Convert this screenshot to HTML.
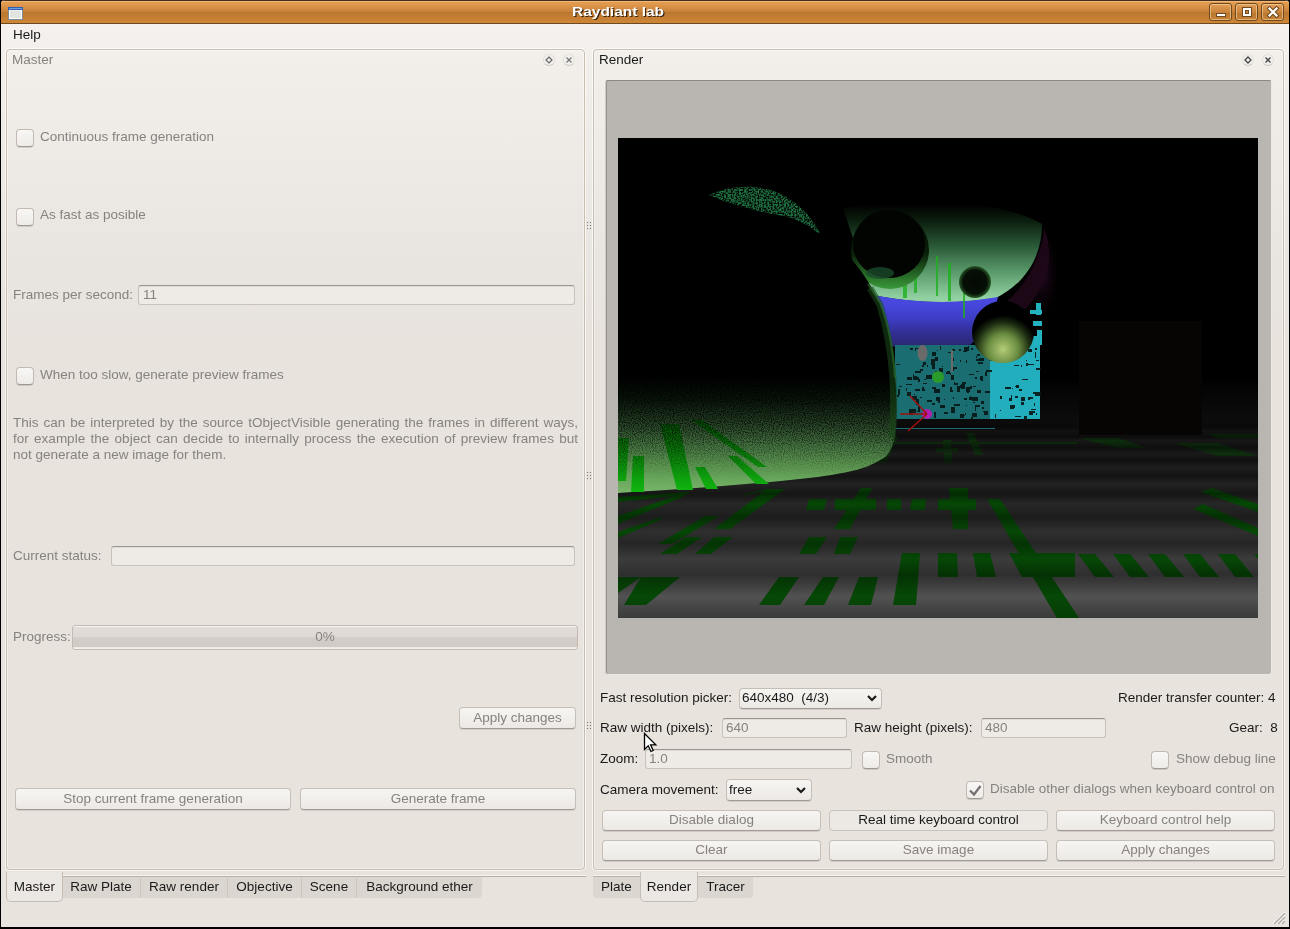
<!DOCTYPE html>
<html><head><meta charset="utf-8">
<style>
*{box-sizing:border-box;margin:0;padding:0}
html,body{width:1290px;height:929px;overflow:hidden;background:#000}
body{position:relative;font-family:"Liberation Sans",sans-serif;font-size:13.5px;color:#1a1a1a}
.a{position:absolute}
.t{position:absolute;white-space:pre;line-height:16px;margin-top:1px;will-change:transform}
.dis{color:#86827e}
#win{position:absolute;left:1px;top:0;width:1288px;height:927px;background:linear-gradient(#f4f1ee 24px,#f2efeb 60px,#efebe7 130px,#e9e5e1 250px,#e8e3dd 340px,#e8e3dd);border-radius:4px 4px 0 0}
#title{position:absolute;left:1px;top:0;width:1288px;height:24px;border-radius:4px 4px 0 0;
 background:linear-gradient(to bottom,#42301f 0px,#42301f 1px,#f0b67a 1px,#f0b67a 2px,#e39c4e 2px,#e09a4e 4px,#c88038 12px,#b8782f 12px,#bd7a31 14px,#cb8335 21px,#cd8535 23px,#6e4a22 23px,#6e4a22 24px)}
.tb{position:absolute;top:3px;width:23px;height:18px;border:1px solid #6e4a22;border-radius:3px;box-shadow:inset 0 0 0 1px rgba(255,220,170,.55);background:linear-gradient(#e3a058,#c88038 55%,#b8782f 56%,#c98236)}
.dk{position:absolute;width:12px;height:12px;border-radius:50%;border:1px solid #e2ddd8;border-bottom-color:#cfc9c3;background:#f3f1ee}
.frame{position:absolute;border:1px solid #c9bdb0;border-radius:4px;background:transparent;box-shadow:0 0 0 1px rgba(255,255,255,.7),inset 0 0 0 1px rgba(255,255,255,.45)}
.dot{position:absolute;width:1px;height:1px;background:#7d7a77;box-shadow:0 0 1px #a9a5a1}
.cb{position:absolute;width:18px;height:18px;border:1px solid #c2bab2;border-bottom-color:#9f9891;border-radius:4px;background:linear-gradient(#f8f7f5,#eeebe8);box-shadow:0 1px 0 rgba(0,0,0,.12)}
.inp{position:absolute;height:20px;border:1px solid #c9c2ba;border-top-color:#9d958d;border-radius:3px;background:#eeebe7;box-shadow:inset 0 1px 0 rgba(0,0,0,.06)}
.btn{will-change:transform;position:absolute;height:22px;border:1px solid #c6bfb7;border-bottom-color:#a39b93;border-radius:4px;background:linear-gradient(#f7f5f3,#ece9e5);text-align:center;line-height:20px;box-shadow:0 1px 0 rgba(0,0,0,.1)}
.tab{will-change:transform;position:absolute;height:22px;background:#dcd6d0;border-top:1px solid #b9b0a6;line-height:20px;text-align:center}
.tabsel{will-change:transform;position:absolute;background:#ebe7e2;border:1px solid #c6beb5;border-top:none;border-radius:0 0 5px 5px;text-align:center;line-height:30px}
</style></head><body>
<div id="win"></div>
<div id="title"></div>
<div class="t" style="left:572px;top:3px;color:#fff;font-weight:bold;font-size:13px;transform-origin:0 0;transform:scaleX(1.19);text-shadow:1px 1px 0 #3a2410">Raydiant lab</div>
<svg class="a" style="left:8px;top:7px" width="15" height="13"><rect x="0.5" y="0.5" width="14" height="12" fill="#fff" stroke="#7c8a98"/><rect x="0" y="0" width="15" height="3" fill="#2f5fb0"/><rect x="1" y="1" width="13" height="1" fill="#6f9fe0"/><rect x="2" y="3.5" width="11" height="7.5" fill="#e2e4e0"/></svg>
<div class="tb" style="left:1209px"></div><div class="tb" style="left:1235px"></div><div class="tb" style="left:1261px"></div>
<div class="a" style="left:1216px;top:13px;width:10px;height:4px;background:#fff;border:1px solid #6e4a22"></div>
<div class="a" style="left:1242px;top:7px;width:10px;height:10px;border:1px solid #6e4a22;box-shadow:inset 0 0 0 2px #fff,inset 0 0 0 3px #6e4a22"></div>
<svg class="a" style="left:1266px;top:6px" width="14" height="12"><path d="M3.5 2.5 L10.5 9.5 M10.5 2.5 L3.5 9.5" stroke="#6e4a22" stroke-width="4.2" stroke-linecap="square"/><path d="M3.5 2.5 L10.5 9.5 M10.5 2.5 L3.5 9.5" stroke="#fff" stroke-width="2.2" stroke-linecap="square"/></svg>

<div class="t" style="left:13px;top:26px">Help</div>

<!-- Master panel -->
<div class="frame" style="left:6px;top:49px;width:579px;height:821px"></div>
<div class="t dis" style="left:12px;top:51px">Master</div>

<div class="cb" style="left:16px;top:129px"></div>
<div class="t dis" style="left:40px;top:128px">Continuous frame generation</div>
<div class="cb" style="left:16px;top:208px"></div>
<div class="t dis" style="left:40px;top:206px">As fast as posible</div>

<div class="t dis" style="left:13px;top:286px">Frames per second:</div>
<div class="inp" style="left:138px;top:285px;width:437px"></div>
<div class="t dis" style="left:143px;top:286px">11</div>

<div class="cb" style="left:16px;top:367px"></div>
<div class="t dis" style="left:40px;top:366px">When too slow, generate preview frames</div>

<div class="t dis" style="left:13px;top:414px;width:565px;white-space:normal;text-align:justify;line-height:16px">This can be interpreted by the source tObjectVisible generating the frames in different ways, for example the object can decide to internally process the execution of preview frames but not generate a new image for them.</div>

<div class="t dis" style="left:13px;top:547px">Current status:</div>
<div class="inp" style="left:111px;top:546px;width:464px"></div>

<div class="t dis" style="left:13px;top:628px">Progress:</div>
<div class="a" style="left:72px;top:625px;width:506px;height:25px;border:1px solid #c3bab1;border-radius:3px;background:linear-gradient(#f7f5f3 0,#f7f5f3 1px,#e2ddd8 1px,#ddd8d3 11px,#d4cdc7 12px,#d2cbc5 21px,#ebe7e3 21px,#f5f3f0 23px)"></div>
<div class="t dis" style="left:72px;top:628px;width:506px;text-align:center">0%</div>

<div class="btn dis" style="left:459px;top:707px;width:117px">Apply changes</div>
<div class="btn dis" style="left:15px;top:788px;width:276px">Stop current frame generation</div>
<div class="btn dis" style="left:300px;top:788px;width:276px">Generate frame</div>

<div class="dot" style="left:587px;top:222px"></div><div class="dot" style="left:590px;top:222px"></div><div class="dot" style="left:587px;top:225px"></div><div class="dot" style="left:590px;top:225px"></div><div class="dot" style="left:587px;top:228px"></div><div class="dot" style="left:590px;top:228px"></div><div class="dot" style="left:587px;top:472px"></div><div class="dot" style="left:590px;top:472px"></div><div class="dot" style="left:587px;top:475px"></div><div class="dot" style="left:590px;top:475px"></div><div class="dot" style="left:587px;top:478px"></div><div class="dot" style="left:590px;top:478px"></div><div class="dot" style="left:587px;top:722px"></div><div class="dot" style="left:590px;top:722px"></div><div class="dot" style="left:587px;top:725px"></div><div class="dot" style="left:590px;top:725px"></div><div class="dot" style="left:587px;top:728px"></div><div class="dot" style="left:590px;top:728px"></div>
<!-- Render panel -->
<div class="frame" style="left:593px;top:49px;width:691px;height:821px"></div>
<div class="t" style="left:599px;top:51px">Render</div>
<div class="a" style="left:605px;top:80px;width:667px;height:595px;background:#b9b5b1;border:1px solid;border-color:#8c8882 #ebe7e3 #ebe7e3 #cfcac5;border-radius:3px;box-shadow:inset 1px 0 0 #97928d"></div>
<div class="a" id="img" style="left:618px;top:138px;width:640px;height:480px;background:#000;overflow:hidden"><!--IMG--><svg width="640" height="480" viewBox="0 0 640 480" style="display:block">
<defs>
<linearGradient id="floor" x1="0" y1="245" x2="0" y2="480" gradientUnits="userSpaceOnUse">
 <stop offset="0" stop-color="#030303"/>
 <stop offset="0.162" stop-color="#0c0c0c"/>
 <stop offset="0.234" stop-color="#161616"/>
 <stop offset="0.362" stop-color="#1e1e1e"/>
 <stop offset="0.489" stop-color="#252525"/>
 <stop offset="0.617" stop-color="#2e2e2e"/>
 <stop offset="0.774" stop-color="#3e3e3e"/>
 <stop offset="0.911" stop-color="#525252"/>
 <stop offset="1" stop-color="#444"/>
</linearGradient>
<linearGradient id="stripes" x1="0" y1="283" x2="0" y2="480" gradientUnits="userSpaceOnUse">
 <stop offset="0.00" stop-color="#000" stop-opacity="0"/>
 <stop offset="0.03" stop-color="#000" stop-opacity="0.45"/>
 <stop offset="0.05" stop-color="#000" stop-opacity="0"/>
 <stop offset="0.08" stop-color="#000" stop-opacity="0.45"/>
 <stop offset="0.10" stop-color="#000" stop-opacity="0"/>
 <stop offset="0.135" stop-color="#000" stop-opacity="0.45"/>
 <stop offset="0.165" stop-color="#000" stop-opacity="0"/>
 <stop offset="0.20" stop-color="#000" stop-opacity="0.45"/>
 <stop offset="0.235" stop-color="#000" stop-opacity="0"/>
 <stop offset="0.28" stop-color="#000" stop-opacity="0.4"/>
 <stop offset="0.32" stop-color="#000" stop-opacity="0"/>
 <stop offset="0.37" stop-color="#000" stop-opacity="0.4"/>
 <stop offset="0.42" stop-color="#000" stop-opacity="0"/>
 <stop offset="0.49" stop-color="#000" stop-opacity="0.35"/>
 <stop offset="0.56" stop-color="#000" stop-opacity="0"/>
 <stop offset="0.62" stop-color="#000" stop-opacity="0.3"/>
 <stop offset="0.70" stop-color="#000" stop-opacity="0"/>
 <stop offset="0.78" stop-color="#000" stop-opacity="0.32"/>
 <stop offset="0.89" stop-color="#000" stop-opacity="0"/>
 <stop offset="1.00" stop-color="#000" stop-opacity="0.15"/>
</linearGradient>
<linearGradient id="spgreen" x1="0" y1="232" x2="0" y2="355" gradientUnits="userSpaceOnUse">
 <stop offset="0" stop-color="#000"/>
 <stop offset="0.05" stop-color="#000"/>
 <stop offset="0.24" stop-color="#0a160a"/>
 <stop offset="0.43" stop-color="#264226"/>
 <stop offset="0.62" stop-color="#467642"/>
 <stop offset="0.76" stop-color="#5a9450"/>
 <stop offset="0.9" stop-color="#6aa85e"/>
 <stop offset="1" stop-color="#7ab66c"/>
</linearGradient>
<linearGradient id="fadeM" x1="0" y1="236" x2="0" y2="340" gradientUnits="userSpaceOnUse">
 <stop offset="0" stop-color="#fff"/>
 <stop offset="0.5" stop-color="#fff" stop-opacity="0.8"/>
 <stop offset="1" stop-color="#fff" stop-opacity="0"/>
</linearGradient>
<mask id="nmask" maskUnits="userSpaceOnUse" x="0" y="230" width="290" height="130"><rect x="0" y="230" width="290" height="130" fill="url(#fadeM)"/></mask>
<clipPath id="litclip"><path d="M0,232 L276,232 C279,260 279,285 276,302 C273,314 268,320 262,322 C250,330 235,334 200,339 C140,346 70,351 0,355 Z"/></clipPath>
<filter id="fblur" x="-0.1" y="-0.1" width="1.2" height="1.2"><feGaussianBlur stdDeviation="2.2 1.2"/></filter>
<filter id="speck2" x="0" y="0" width="1" height="1">
 <feTurbulence type="fractalNoise" baseFrequency="0.6" numOctaves="1" seed="7" result="n"/>
 <feColorMatrix in="n" type="matrix" values="0 0 0 0 0  0 0 0 0 0  0 0 0 0 0  0 0 0 -4 2.6" result="m"/>
 <feComposite in="SourceGraphic" in2="m" operator="in"/>
</filter>
<filter id="speck" x="0" y="0" width="1" height="1">
 <feTurbulence type="fractalNoise" baseFrequency="0.9" numOctaves="1" seed="4" result="n"/>
 <feColorMatrix in="n" type="matrix" values="0 0 0 0 0  0 0 0 0 0  0 0 0 0 0  0 0 0 -3 1.8" result="m"/>
 <feComposite in="SourceGraphic" in2="m" operator="in"/>
</filter>
<linearGradient id="dome" x1="0" y1="66" x2="0" y2="160" gradientUnits="userSpaceOnUse">
 <stop offset="0" stop-color="#000"/>
 <stop offset="0.18" stop-color="#0c1e0e"/>
 <stop offset="0.45" stop-color="#2a5a38"/>
 <stop offset="0.72" stop-color="#5a9a6a"/>
 <stop offset="1" stop-color="#92d2a2"/>
</linearGradient>
<linearGradient id="blue" x1="0" y1="157" x2="0" y2="208" gradientUnits="userSpaceOnUse">
 <stop offset="0" stop-color="#4c4ce8"/>
 <stop offset="0.45" stop-color="#3e3ec8"/>
 <stop offset="0.7" stop-color="#33309a"/>
 <stop offset="1" stop-color="#2a2870"/>
</linearGradient>
<radialGradient id="sph3" cx="0.5" cy="0.78" r="0.55">
 <stop offset="0" stop-color="#b4cc78"/>
 <stop offset="0.45" stop-color="#6a8c40"/>
 <stop offset="0.8" stop-color="#1a2a10"/>
 <stop offset="1" stop-color="#000"/>
</radialGradient>
<radialGradient id="sph1" cx="0.5" cy="0.62" r="0.5" fx="0.5" fy="0.75">
 <stop offset="0" stop-color="#0a1a0a"/>
 <stop offset="0.6" stop-color="#040a04"/>
 <stop offset="0.85" stop-color="#1a4a1a"/>
 <stop offset="1" stop-color="#3a8a3a"/>
</radialGradient>
<linearGradient id="sph1l" x1="0" y1="0" x2="0" y2="1">
 <stop offset="0" stop-color="#000"/>
 <stop offset="0.55" stop-color="#0a200a"/>
 <stop offset="1" stop-color="#3a9a3a"/>
</linearGradient>
<radialGradient id="sph2" cx="0.5" cy="0.5" r="0.5">
 <stop offset="0" stop-color="#040804"/>
 <stop offset="0.75" stop-color="#061006"/>
 <stop offset="1" stop-color="#2a5a2a"/>
</radialGradient>
<radialGradient id="glow" cx="0.5" cy="0.5" r="0.5">
 <stop offset="0" stop-color="#4a1040" stop-opacity="0.9"/>
 <stop offset="1" stop-color="#000" stop-opacity="0"/>
</radialGradient>
<linearGradient id="stripeg" x1="0" y1="280" x2="0" y2="355" gradientUnits="userSpaceOnUse">
 <stop offset="0" stop-color="#064406"/>
 <stop offset="1" stop-color="#10b810"/>
</linearGradient>
</defs>
<rect width="640" height="480" fill="#000"/>
<!-- floor -->
<rect x="0" y="245" width="640" height="235" fill="url(#floor)"/>
<!-- floor green bars -->
<g fill="#064806">
 <polygon points="23,439 62,439 28,467 6,467"/>
 <polygon points="0,439 23,439 0,455"/>
 <polygon points="161,439 181,439 162,467 141,467"/>
 <polygon points="205,439 221,439 206,467 186,467"/>
 <polygon points="241,439 260,439 253,467 230,467"/>
 <polygon points="284,415 302,415 298,467 275,467"/>
  <polygon points="191,399 209,399 198,416 181,416"/>
 <polygon points="222,399 240,399 232,416 216,416"/>
 <polygon points="243,350 254,350 232,391 216,391"/>
 <polygon points="217,361 258,361 258,372 217,372"/>
 <polygon points="191,361 209,361 206,372 188,372"/>
 <polygon points="269,361 283,361 283,372 269,372"/>
 <polygon points="294,361 308,361 307,372 292,372"/>
 <polygon points="0,359 70,354 65,357 0,364"/>
 <polygon points="0,378 68,354 72,354 62,360 0,386"/>
 <polygon points="0,394 46,378 40,383 0,400"/>
 <polygon points="87,378 101,378 54,406 40,406"/>
 <polygon points="68,399 84,399 59,416 42,416"/>
 <polygon points="96,399 115,399 93,416 77,416"/>
 <polygon points="149,351 167,351 112,391 96,391"/>
 <polygon points="122,357 149,351 155,351 128,357"/>
 <polygon points="320,415 339,415 340,439 320,439"/>
 <polygon points="355,415 372,415 378,439 359,439"/>
 <polygon points="391,415 457,415 457,439 404,439"/>
 <polygon points="460,416 477,416 496,439 477,439"/>
 <polygon points="495,416 512,416 531,439 512,439"/>
 <polygon points="530,416 547,416 566,439 547,439"/>
 <polygon points="565,416 582,416 601,439 582,439"/>
 <polygon points="600,416 617,416 636,439 617,439"/>
 <polygon points="636,416 640,416 640,421"/>
 <polygon points="369,361 382,361 461,480 439,480"/>
 <polygon points="331,350 350,350 350,391 335,391"/>
 <polygon points="320,361 358,361 358,372 320,372"/>
 <polygon points="594,350 640,366 640,374 583,354"/>
 <polygon points="585,366 640,390 640,398 575,371"/>
</g>
<g fill="#074007" opacity="0.55">
 <polygon points="270,299 280,299 268,325 258,325"/>
 <polygon points="325,302 333,302 334,325 326,325"/>
 <polygon points="318,310 340,310 340,314 318,314"/>
 <polygon points="348,295 356,295 365,317 357,317"/>
 <polygon points="240,304 460,304 460,306 240,306"/>
 <polygon points="460,300 500,300 530,310 500,310"/>
 <polygon points="555,305 600,305 640,318 600,318"/>
 <polygon points="590,296 640,296 640,300 600,300"/>
</g>
<rect x="0" y="245" width="640" height="235" fill="url(#stripes)"/>
<!-- dark box -->
<rect x="461" y="183" width="123" height="114" fill="#070503"/>
<!-- magenta glow -->
<ellipse cx="425" cy="135" rx="18" ry="50" fill="url(#glow)" opacity="0.6"/>
<!-- dome -->
<path d="M225,70 C280,58 380,60 424,86 C424,118 408,145 378,160 C340,166 300,166 255,157 C245,130 235,100 225,70 Z" fill="url(#dome)"/>
<path d="M426,90 C440,125 425,160 395,182 L386,166 C410,145 424,118 426,90 Z" fill="#1e0818" opacity="0.9"/>
<!-- blue band -->
<path d="M250,156 C300,166 340,166 380,159 C376,178 366,196 352,207 C320,211 300,211 270,208 C262,190 256,172 250,156 Z" fill="url(#blue)"/>
<!-- green drips on dome -->
<g fill="#20b020" opacity="0.8">
 <rect x="296" y="130" width="3" height="25"/><rect x="318" y="118" width="2" height="40"/><rect x="330" y="125" width="3" height="38"/>
 <rect x="285" y="140" width="4" height="20"/><rect x="345" y="150" width="2" height="30"/>
</g>
<!-- teal structure -->
<rect x="277" y="207" width="95" height="74" fill="#1a6e72"/>
<rect x="372" y="207" width="50" height="74" fill="#22aebc"/>
<g fill="#22b2c0"><rect x="418" y="165" width="5" height="12"/><rect x="412" y="172" width="12" height="4"/><rect x="415" y="183" width="9" height="5"/><rect x="419" y="192" width="5" height="8"/><rect x="410" y="198" width="14" height="9"/></g>
<g fill="#061818" opacity="0.92"><rect x="342" y="247" width="4" height="3"/><rect x="361" y="220" width="5" height="3"/><rect x="390" y="214" width="2" height="3"/><rect x="393" y="257" width="1" height="4"/><rect x="415" y="254" width="5" height="2"/><rect x="396" y="212" width="1" height="2"/><rect x="363" y="263" width="3" height="3"/><rect x="305" y="224" width="3" height="3"/><rect x="289" y="254" width="4" height="4"/><rect x="397" y="258" width="3" height="2"/><rect x="281" y="248" width="3" height="1"/><rect x="319" y="212" width="1" height="1"/><rect x="410" y="211" width="4" height="3"/><rect x="358" y="221" width="6" height="2"/><rect x="322" y="208" width="1" height="4"/><rect x="378" y="208" width="3" height="4"/><rect x="357" y="239" width="2" height="2"/><rect x="332" y="235" width="1" height="2"/><rect x="416" y="265" width="1" height="3"/><rect x="333" y="269" width="4" height="6"/><rect x="418" y="222" width="3" height="1"/><rect x="324" y="228" width="1" height="1"/><rect x="360" y="224" width="5" height="2"/><rect x="342" y="276" width="4" height="4"/><rect x="332" y="252" width="3" height="2"/><rect x="313" y="221" width="4" height="6"/><rect x="413" y="271" width="5" height="1"/><rect x="292" y="210" width="3" height="2"/><rect x="333" y="237" width="3" height="5"/><rect x="302" y="259" width="2" height="1"/><rect x="357" y="268" width="1" height="5"/><rect x="408" y="222" width="1" height="1"/><rect x="341" y="211" width="2" height="2"/><rect x="359" y="216" width="3" height="2"/><rect x="417" y="254" width="6" height="4"/><rect x="297" y="210" width="1" height="3"/><rect x="377" y="276" width="1" height="4"/><rect x="346" y="260" width="3" height="2"/><rect x="288" y="246" width="6" height="1"/><rect x="382" y="258" width="2" height="3"/><rect x="345" y="213" width="4" height="1"/><rect x="359" y="252" width="4" height="3"/><rect x="364" y="213" width="6" height="1"/><rect x="403" y="259" width="4" height="4"/><rect x="343" y="246" width="4" height="5"/><rect x="363" y="242" width="2" height="1"/><rect x="365" y="273" width="3" height="1"/><rect x="297" y="251" width="5" height="2"/><rect x="326" y="274" width="4" height="2"/><rect x="372" y="221" width="4" height="2"/><rect x="332" y="249" width="2" height="3"/><rect x="348" y="267" width="1" height="1"/><rect x="317" y="219" width="3" height="4"/><rect x="308" y="237" width="6" height="4"/><rect x="322" y="267" width="5" height="3"/><rect x="396" y="227" width="5" height="1"/><rect x="317" y="233" width="4" height="6"/><rect x="296" y="240" width="2" height="1"/><rect x="297" y="210" width="6" height="1"/><rect x="367" y="254" width="3" height="1"/><rect x="306" y="241" width="2" height="1"/><rect x="353" y="210" width="2" height="2"/><rect x="354" y="275" width="5" height="4"/><rect x="300" y="268" width="2" height="6"/><rect x="410" y="259" width="2" height="3"/><rect x="366" y="273" width="4" height="4"/><rect x="403" y="264" width="3" height="3"/><rect x="417" y="214" width="1" height="6"/><rect x="406" y="278" width="3" height="4"/><rect x="410" y="226" width="6" height="1"/><rect x="289" y="239" width="5" height="3"/><rect x="347" y="209" width="1" height="3"/><rect x="302" y="231" width="3" height="2"/><rect x="351" y="259" width="6" height="3"/><rect x="347" y="275" width="1" height="2"/><rect x="357" y="267" width="5" height="2"/><rect x="398" y="247" width="3" height="3"/><rect x="401" y="251" width="3" height="2"/><rect x="352" y="248" width="2" height="3"/><rect x="349" y="251" width="1" height="4"/><rect x="351" y="236" width="5" height="1"/><rect x="376" y="212" width="5" height="3"/><rect x="414" y="273" width="3" height="2"/><rect x="295" y="238" width="4" height="4"/><rect x="304" y="251" width="3" height="2"/><rect x="417" y="210" width="2" height="2"/><rect x="318" y="259" width="2" height="4"/><rect x="348" y="249" width="4" height="5"/><rect x="305" y="245" width="4" height="1"/><rect x="336" y="245" width="4" height="2"/><rect x="367" y="253" width="5" height="2"/><rect x="364" y="269" width="2" height="2"/><rect x="322" y="230" width="2" height="2"/><rect x="305" y="214" width="2" height="2"/><rect x="314" y="214" width="4" height="4"/><rect x="295" y="236" width="1" height="6"/><rect x="358" y="233" width="3" height="1"/><rect x="368" y="232" width="6" height="2"/><rect x="346" y="209" width="5" height="4"/><rect x="358" y="218" width="1" height="2"/><rect x="397" y="278" width="6" height="1"/><rect x="296" y="256" width="1" height="1"/><rect x="344" y="244" width="4" height="2"/><rect x="279" y="257" width="2" height="2"/><rect x="328" y="234" width="4" height="2"/><rect x="350" y="208" width="1" height="3"/><rect x="304" y="249" width="2" height="3"/><rect x="294" y="260" width="3" height="2"/><rect x="324" y="246" width="3" height="3"/><rect x="335" y="259" width="1" height="2"/><rect x="291" y="271" width="4" height="6"/><rect x="316" y="276" width="2" height="3"/><rect x="335" y="220" width="1" height="3"/><rect x="348" y="222" width="1" height="3"/><rect x="280" y="251" width="2" height="6"/><rect x="334" y="211" width="3" height="2"/><rect x="314" y="227" width="3" height="4"/><rect x="336" y="244" width="1" height="3"/><rect x="288" y="250" width="1" height="3"/><rect x="300" y="241" width="2" height="3"/><rect x="362" y="238" width="3" height="4"/><rect x="334" y="229" width="5" height="2"/><rect x="316" y="274" width="2" height="6"/><rect x="387" y="249" width="6" height="2"/><rect x="375" y="211" width="3" height="3"/><rect x="418" y="275" width="1" height="2"/><rect x="345" y="277" width="2" height="1"/><rect x="411" y="259" width="4" height="2"/><rect x="394" y="250" width="1" height="1"/><rect x="342" y="222" width="1" height="2"/><rect x="295" y="239" width="6" height="3"/><rect x="314" y="249" width="4" height="2"/><rect x="353" y="279" width="2" height="3"/><rect x="293" y="271" width="5" height="4"/><rect x="316" y="251" width="6" height="4"/><rect x="304" y="227" width="2" height="2"/><rect x="349" y="254" width="2" height="1"/><rect x="278" y="226" width="4" height="1"/><rect x="309" y="227" width="1" height="2"/><rect x="367" y="234" width="2" height="4"/><rect x="326" y="261" width="1" height="1"/><rect x="395" y="267" width="2" height="3"/><rect x="314" y="265" width="3" height="2"/><rect x="418" y="230" width="5" height="2"/><rect x="330" y="214" width="3" height="1"/><rect x="339" y="248" width="3" height="6"/><rect x="388" y="212" width="4" height="2"/><rect x="320" y="259" width="2" height="6"/><rect x="297" y="233" width="6" height="2"/><rect x="294" y="258" width="5" height="4"/><rect x="411" y="273" width="4" height="4"/><rect x="321" y="230" width="4" height="4"/><rect x="329" y="233" width="3" height="3"/><rect x="391" y="260" width="3" height="3"/><rect x="397" y="248" width="2" height="1"/><rect x="403" y="227" width="1" height="2"/><rect x="355" y="248" width="3" height="1"/><rect x="355" y="264" width="2" height="1"/><rect x="382" y="272" width="1" height="1"/><rect x="298" y="261" width="3" height="6"/><rect x="309" y="262" width="5" height="2"/><rect x="333" y="231" width="3" height="2"/><rect x="354" y="259" width="6" height="4"/><rect x="336" y="266" width="6" height="2"/><rect x="392" y="267" width="4" height="4"/><rect x="352" y="258" width="1" height="3"/><rect x="408" y="225" width="2" height="3"/><rect x="323" y="235" width="2" height="5"/><rect x="404" y="241" width="6" height="1"/><rect x="299" y="273" width="3" height="1"/></g>
<rect x="277" y="290" width="100" height="1" fill="#1a6a70"/>
<!-- spheres -->
<circle cx="272" cy="112" r="39" fill="url(#sph1l)"/><ellipse cx="271" cy="106" rx="36" ry="34" fill="#020402"/><ellipse cx="262" cy="135" rx="14" ry="6" fill="#1a4a2a" opacity="0.8"/>
<circle cx="357" cy="144" r="16" fill="url(#sph2)"/>
<circle cx="385" cy="194" r="31" fill="url(#sph3)"/>
<circle cx="320" cy="239" r="6" fill="#2a9a2a"/>
<ellipse cx="304.5" cy="215" rx="5" ry="8" fill="#6a6a6a"/>
<rect x="333" y="212" width="2" height="22" fill="#6a6a6a"/>
<circle cx="309" cy="276" r="5" fill="#b020b0"/>
<path d="M309,276 L282,276 M309,276 L290,293 M309,276 L292,258" stroke="#a01010" stroke-width="1.5"/>
<!-- big sphere -->
<path d="M0,90 C30,65 60,55 92,55 C130,50 175,62 205,95 C232,115 250,140 262,165 C270,185 275,210 277,240 C279,260 279,285 276,302 C273,314 268,320 262,322 C250,330 235,334 200,339 C140,346 70,351 0,355 Z" fill="#000"/>
<path d="M0,232 L276,232 C279,260 279,285 276,302 C273,314 268,320 262,322 C250,330 235,334 200,339 C140,346 70,351 0,355 Z" fill="url(#spgreen)"/>
<g fill="url(#stripeg)">
 <polygon points="0,300 11,300 8,343 0,343"/>
 <polygon points="15,318 26,318 26,354 13,354"/>
 <polygon points="42,286 61,286 75,352 59,352"/>
 <polygon points="77,329 87,329 100,351 88,351"/>
 <polygon points="110,318 119,318 151,346 138,346"/>
 <polygon points="73,282 84,282 149,329 140,329"/>
</g>
<g clip-path="url(#litclip)" mask="url(#nmask)"><rect x="0" y="230" width="290" height="130" fill="#000" filter="url(#speck)"/></g>
<!-- rim speckle -->
<path d="M252,150 C258,160 262,167 262,167 C268,187 273,212 275,240 C276,260 276,280 274,300" stroke="#1a4a1a" stroke-width="7" fill="none" opacity="0.55"/><path d="M250,146 C256,155 262,165 262,165 C270,185 275,210 277,240" stroke="#2a6a2a" stroke-width="2" fill="none" opacity="0.7"/>
<!-- crescent highlight -->
<path d="M91,57 C108,49 135,45 158,54 C178,62 194,78 203,97 C190,87 178,80 165,78 C135,73 110,65 91,57 Z" fill="#1d7040" filter="url(#speck2)"/>
</svg><!--/IMG--></div>


<!-- render controls -->
<div class="t" style="left:600px;top:689px">Fast resolution picker:</div>
<div class="btn" style="left:739px;top:688px;width:143px;height:21px;text-align:left;padding-left:2px;line-height:18px;color:#1a1a1a">640x480&nbsp; (4/3)</div>
<svg class="a" style="left:866px;top:693px" width="12" height="10"><path d="M2 3 L6 7 L10 3" stroke="#1a1a1a" stroke-width="2.2" fill="none"/></svg>
<div class="t" style="left:1118px;top:689px">Render transfer counter: 4</div>

<div class="t" style="left:600px;top:719px">Raw width (pixels):</div>
<div class="inp" style="left:722px;top:718px;width:125px;height:20px"></div>
<div class="t dis" style="left:726px;top:719px">640</div>
<div class="t" style="left:854px;top:719px">Raw height (pixels):</div>
<div class="inp" style="left:981px;top:718px;width:125px;height:20px"></div>
<div class="t dis" style="left:985px;top:719px">480</div>
<div class="t" style="left:1229px;top:719px">Gear:&nbsp; 8</div>

<div class="t" style="left:600px;top:750px">Zoom:</div>
<div class="inp" style="left:645px;top:749px;width:207px;height:20px"></div>
<div class="t dis" style="left:649px;top:750px">1.0</div>
<div class="cb" style="left:862px;top:751px"></div>
<div class="t dis" style="left:886px;top:750px">Smooth</div>
<div class="cb" style="left:1151px;top:751px"></div>
<div class="t dis" style="left:1176px;top:750px">Show debug line</div>

<div class="t" style="left:600px;top:781px">Camera movement:</div>
<div class="btn" style="left:726px;top:779px;width:86px;height:22px;text-align:left;padding-left:2px;line-height:19px;color:#1a1a1a">free</div>
<svg class="a" style="left:795px;top:785px" width="12" height="10"><path d="M2 3 L6 7 L10 3" stroke="#1a1a1a" stroke-width="2.2" fill="none"/></svg>
<div class="cb" style="left:966px;top:781px"></div>
<svg class="a" style="left:966px;top:781px" width="18" height="18"><path d="M4 9.5 L8 13.5 L14.5 5" stroke="#747170" stroke-width="2.3" fill="none"/></svg>
<div class="t dis" style="left:990px;top:780px">Disable other dialogs when keyboard control on</div>

<div class="btn dis" style="left:602px;top:810px;width:219px;height:21px;line-height:18px">Disable dialog</div>
<div class="btn" style="left:829px;top:810px;width:219px;height:21px;line-height:18px;background:#ece8e4;box-shadow:none;border-color:#c9c2ba">Real time keyboard control</div>
<div class="btn dis" style="left:1056px;top:810px;width:219px;height:21px;line-height:18px">Keyboard control help</div>
<div class="btn dis" style="left:602px;top:840px;width:219px;height:21px;line-height:18px">Clear</div>
<div class="btn dis" style="left:829px;top:840px;width:219px;height:21px;line-height:18px">Save image</div>
<div class="btn dis" style="left:1056px;top:840px;width:219px;height:21px;line-height:18px">Apply changes</div>

<!-- tab bars -->
<div class="a" style="left:6px;top:875px;width:580px;height:1px;background:#f7f5f3"></div>
<div class="a" style="left:6px;top:876px;width:580px;height:1px;background:#b5aca2"></div>
<div class="tab" style="left:62px;top:876px;width:78px">Raw Plate</div>
<div class="tab" style="left:140px;top:876px;width:87px;border-left:1px solid #cdc5bd">Raw render</div>
<div class="tab" style="left:227px;top:876px;width:74px;border-left:1px solid #cdc5bd">Objective</div>
<div class="tab" style="left:301px;top:876px;width:55px;border-left:1px solid #cdc5bd">Scene</div>
<div class="tab" style="left:356px;top:876px;width:126px;border-left:1px solid #cdc5bd;border-radius:0 0 4px 0">Background ether</div>
<div class="tabsel" style="left:6px;top:872px;width:57px;height:30px">Master</div>

<div class="a" style="left:593px;top:875px;width:692px;height:1px;background:#f7f5f3"></div>
<div class="a" style="left:593px;top:876px;width:692px;height:1px;background:#b5aca2"></div>
<div class="tab" style="left:593px;top:876px;width:47px;border-radius:0 0 0 4px">Plate</div>
<div class="tab" style="left:698px;top:876px;width:55px;border-radius:0 0 4px 0">Tracer</div>
<div class="tabsel" style="left:640px;top:872px;width:58px;height:30px">Render</div>
<div class="dk" style="left:543px;top:53.5px"></div><svg class="a" style="left:543px;top:53.5px" width="12" height="12"><path d="M6 3 L9 6 L6 9 L3 6 Z" fill="none" stroke="#666" stroke-width="1.2"/></svg>
<div class="dk" style="left:563px;top:53.5px"></div><svg class="a" style="left:563px;top:53.5px" width="12" height="12"><path d="M3.5 3.5 L8.5 8.5 M8.5 3.5 L3.5 8.5" stroke="#777" stroke-width="1.3"/></svg>
<div class="dk" style="left:1242px;top:53.5px"></div><svg class="a" style="left:1242px;top:53.5px" width="12" height="12"><path d="M6 3 L9 6 L6 9 L3 6 Z" fill="none" stroke="#444" stroke-width="1.3"/></svg>
<div class="dk" style="left:1262px;top:53.5px"></div><svg class="a" style="left:1262px;top:53.5px" width="12" height="12"><path d="M3.5 3.5 L8.5 8.5 M8.5 3.5 L3.5 8.5" stroke="#444" stroke-width="1.4"/></svg>
<svg class="a" style="left:643px;top:732px" width="16" height="22"><path d="M1.5 1.5 L1.5 17.5 L5.2 13.8 L8 19.5 L10.2 18.5 L7.6 12.8 L12.8 12.8 Z" fill="#fff" stroke="#000" stroke-width="1.3" stroke-linejoin="miter"/></svg>
<svg class="a" style="left:1271px;top:910px" width="16" height="16"><g stroke-width="1.2"><path d="M2 14 L14 2" stroke="#fff"/><path d="M3 14 L14 3" stroke="#aaa6a2"/><path d="M6 14 L14 6" stroke="#fff"/><path d="M7 14 L14 7" stroke="#aaa6a2"/><path d="M10 14 L14 10" stroke="#fff"/><path d="M11 14 L14 11" stroke="#aaa6a2"/></g></svg>
</body></html>
